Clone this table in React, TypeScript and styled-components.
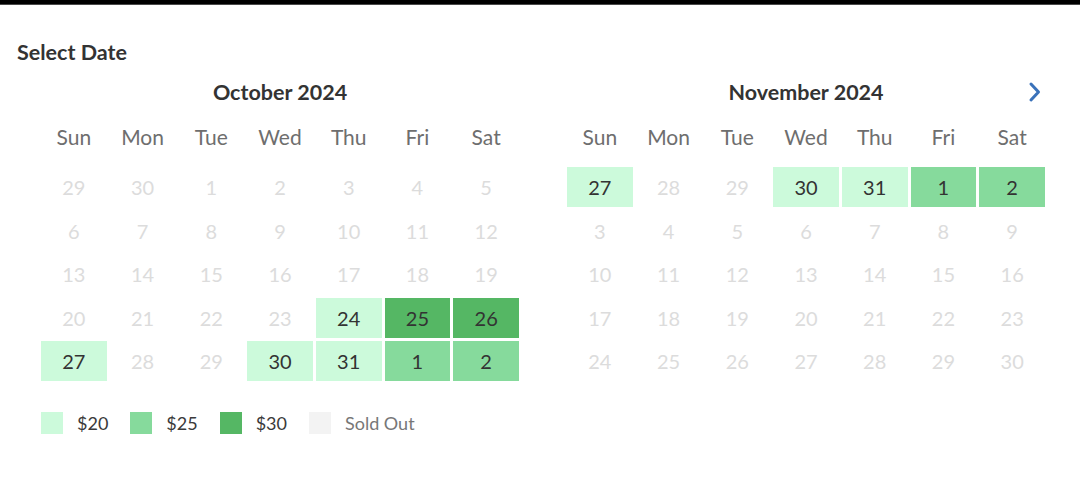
import React from "react";
import styled, { createGlobalStyle } from "styled-components";

const GlobalStyle = createGlobalStyle`
  html, body { margin: 0; padding: 0; background: #fff; }
  body { font-family: Lato, "Noto Sans", sans-serif; color: #333; }
  * { box-sizing: border-box; }
`;

type Tier = "none" | "low" | "mid" | "high" | "sold";

const tierBg: Record<Tier, string> = {
  none: "transparent",
  low: "#ccfadb",
  mid: "#86da9c",
  high: "#55b764",
  sold: "#f3f3f3",
};

const TopBar = styled.div`
  height: 5px;
  background: #000;
  border-bottom: 1px solid #4a4a4a;
`;

const Page = styled.div`
  padding: 0 17px;
`;

const Heading = styled.h2`
  margin: 35px 0 0;
  font-size: 21.5px;
  line-height: 24px;
  font-weight: 700;
  color: #333;
`;

const Months = styled.div`
  display: flex;
  gap: 48px;
  padding-left: 24px;
`;

const Month = styled.section`
  width: 478px;
  display: flex;
  flex-direction: column;
`;

const MonthHeader = styled.div`
  position: relative;
  margin-top: 16px;
  height: 24px;
  text-align: center;
`;

const MonthTitle = styled.h3`
  margin: 0;
  font-size: 21.5px;
  line-height: 24px;
  font-weight: 700;
  color: #333;
`;

const NextButton = styled.button`
  position: absolute;
  right: 2px;
  top: 1px;
  width: 16px;
  height: 22px;
  padding: 0;
  border: 0;
  background: none;
  display: flex;
  align-items: center;
  justify-content: center;
  cursor: pointer;
`;

const Weekdays = styled.div`
  margin-top: 21px;
  display: grid;
  grid-template-columns: repeat(7, 1fr);
  column-gap: 3px;
`;

const Weekday = styled.div`
  text-align: center;
  font-size: 21px;
  line-height: 24px;
  color: #6e6e6e;
`;

const Days = styled.div`
  margin-top: 18px;
  display: grid;
  grid-template-columns: repeat(7, 1fr);
  column-gap: 3px;
  row-gap: 3.5px;
`;

const Day = styled.div<{ $tier: Tier }>`
  height: 40px;
  display: flex;
  align-items: center;
  justify-content: center;
  font-size: 20px;
  background: ${(p) => tierBg[p.$tier]};
  color: ${(p) => (p.$tier === "none" ? "#dcdcdc" : "#333")};
  cursor: ${(p) => (p.$tier === "none" ? "default" : "pointer")};
`;

const Legend = styled.div`
  margin-top: 31px;
  padding-left: 24px;
  display: flex;
  align-items: center;
  gap: 22px;
`;

const LegendItem = styled.div`
  display: flex;
  align-items: center;
  gap: 14px;
`;

const Swatch = styled.span<{ $tier: Tier }>`
  width: 22px;
  height: 22px;
  background: ${(p) => tierBg[p.$tier]};
`;

const LegendLabel = styled.span<{ $muted?: boolean }>`
  font-size: 18px;
  line-height: 22px;
  color: ${(p) => (p.$muted ? "#777" : "#3a3a3a")};
`;

const WEEKDAYS = ["Sun", "Mon", "Tue", "Wed", "Thu", "Fri", "Sat"];

type Cell = [number, Tier];

const october: Cell[] = [
  [29, "none"], [30, "none"], [1, "none"], [2, "none"], [3, "none"], [4, "none"], [5, "none"],
  [6, "none"], [7, "none"], [8, "none"], [9, "none"], [10, "none"], [11, "none"], [12, "none"],
  [13, "none"], [14, "none"], [15, "none"], [16, "none"], [17, "none"], [18, "none"], [19, "none"],
  [20, "none"], [21, "none"], [22, "none"], [23, "none"], [24, "low"], [25, "high"], [26, "high"],
  [27, "low"], [28, "none"], [29, "none"], [30, "low"], [31, "low"], [1, "mid"], [2, "mid"],
];

const november: Cell[] = [
  [27, "low"], [28, "none"], [29, "none"], [30, "low"], [31, "low"], [1, "mid"], [2, "mid"],
  [3, "none"], [4, "none"], [5, "none"], [6, "none"], [7, "none"], [8, "none"], [9, "none"],
  [10, "none"], [11, "none"], [12, "none"], [13, "none"], [14, "none"], [15, "none"], [16, "none"],
  [17, "none"], [18, "none"], [19, "none"], [20, "none"], [21, "none"], [22, "none"], [23, "none"],
  [24, "none"], [25, "none"], [26, "none"], [27, "none"], [28, "none"], [29, "none"], [30, "none"],
];

const Chevron = () => (
  <svg width="14" height="22" viewBox="0 0 14 22" aria-hidden>
    <polyline
      points="3,3 10.5,11 3,19"
      fill="none"
      stroke="#3a72ba"
      strokeWidth="3"
      strokeLinecap="round"
      strokeLinejoin="round"
    />
  </svg>
);

const MonthView = ({ title, cells, next }: { title: string; cells: Cell[]; next?: boolean }) => (
  <Month>
    <MonthHeader>
      <MonthTitle>{title}</MonthTitle>
      {next && (
        <NextButton aria-label="Next month">
          <Chevron />
        </NextButton>
      )}
    </MonthHeader>
    <Weekdays>
      {WEEKDAYS.map((d) => (
        <Weekday key={d}>{d}</Weekday>
      ))}
    </Weekdays>
    <Days>
      {cells.map(([n, t], i) => (
        <Day key={i} $tier={t}>
          {n}
        </Day>
      ))}
    </Days>
  </Month>
);

export default function App() {
  return (
    <>
      <GlobalStyle />
      <TopBar />
      <Page>
        <Heading>Select Date</Heading>
        <Months>
          <MonthView title="October 2024" cells={october} />
          <MonthView title="November 2024" cells={november} next />
        </Months>
        <Legend>
          <LegendItem>
            <Swatch $tier="low" />
            <LegendLabel>$20</LegendLabel>
          </LegendItem>
          <LegendItem>
            <Swatch $tier="mid" />
            <LegendLabel>$25</LegendLabel>
          </LegendItem>
          <LegendItem>
            <Swatch $tier="high" />
            <LegendLabel>$30</LegendLabel>
          </LegendItem>
          <LegendItem>
            <Swatch $tier="sold" />
            <LegendLabel $muted>Sold Out</LegendLabel>
          </LegendItem>
        </Legend>
      </Page>
    </>
  );
}
